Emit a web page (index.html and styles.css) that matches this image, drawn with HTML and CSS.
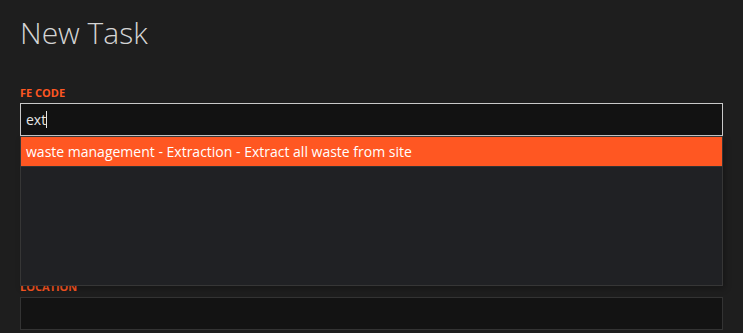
FILE: index.html
```html
<!DOCTYPE html>
<html>
<head>
<meta charset="utf-8">
<link rel="stylesheet" href="styles.css">
</head>
<body>
<div class="page">
  <h1 class="title">New Task</h1>
  <form class="form">
    <div class="field field-first">
      <label class="label">FE Code</label>
      <div class="combo">
        <div class="input input-focus"><span class="value">ext</span><span class="caret"></span></div>
        <ul class="menu">
          <li class="menu-item active">waste management - Extraction - Extract all waste from site</li>
        </ul>
      </div>
    </div>
    <div class="field">
      <label class="label">Description</label>
      <div class="input textarea"></div>
    </div>
    <div class="field">
      <label class="label">Location</label>
      <div class="input"></div>
    </div>
  </form>
</div>
</body>
</html>
```
FILE: styles.css
```css
html, body {
  margin: 0;
  padding: 0;
  background: #1e1e1e;
  font-family: "Open Sans", "Liberation Sans", sans-serif;
}
.page {
  padding: 12px 20px 0 20px;
}
.title {
  margin: 0;
  font-size: 30px;
  font-weight: 300;
  line-height: 41px;
  height: 41px;
  color: #d4d4d4;
}
.form {
  display: flex;
  flex-direction: column;
  gap: 34px;
  margin-top: 32px;
}
.field {
  display: flex;
  flex-direction: column;
  gap: 3px;
}
.label {
  font-size: 11px;
  font-weight: 700;
  line-height: 15px;
  height: 15px;
  text-transform: uppercase;
  color: #ff5722;
}
.combo {
  position: relative;
}
.input {
  box-sizing: border-box;
  height: 33px;
  border: 1px solid #333;
  background: #131313;
  padding: 0 5px;
  display: flex;
  align-items: center;
  font-size: 14px;
  color: #e6e6e6;
}
.input-focus {
  border-color: #c9c9c9;
  background: #121212;
}
.caret {
  width: 1px;
  height: 17px;
  background: #e6e6e6;
}
.textarea {
  height: 57px;
}
.menu {
  position: absolute;
  left: 0;
  right: 0;
  top: 33px;
  height: 150px;
  box-sizing: border-box;
  margin: 0;
  padding: 0;
  list-style: none;
  background: #202124;
  border: 1px solid #363636;
  box-shadow: 2px 3px 6px rgba(0, 0, 0, 0.25);
  z-index: 10;
}
.menu-item {
  padding: 5px 5px;
  line-height: 19px;
  font-size: 14px;
  color: #ffffff;
  border-bottom: 1px solid #333;
}
.menu-item.active {
  background: #ff5722;
}
```
